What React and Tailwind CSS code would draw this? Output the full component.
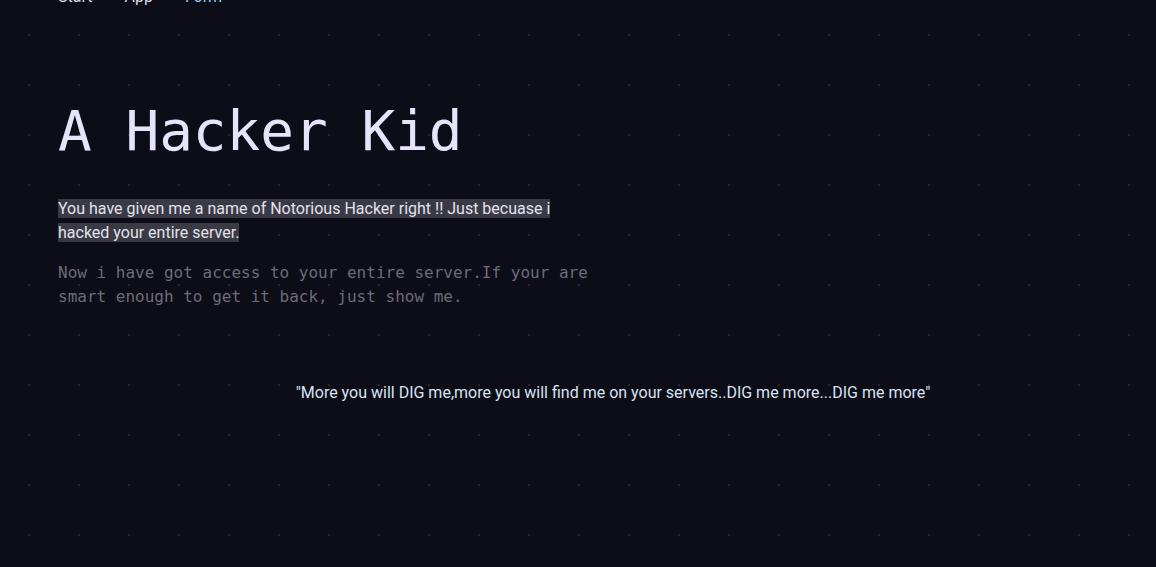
export default function App() {
  return (
    <div className="min-h-[567px] bg-[#0c0d16] bg-[radial-gradient(circle,#262632_1px,transparent_1.5px)] bg-[size:50px_50px] bg-[position:4px_10px] overflow-hidden font-['Roboto',sans-serif]">
      <nav className="flex gap-8 px-[58px] -mt-[15px] text-base leading-6">
        <a className="text-[#d8d8e4]">Start</a>
        <a className="text-[#d8d8e4]">App</a>
        <a className="text-[#8ec9f0]">Form</a>
      </nav>

      <div className="px-[58px] pt-[94px]">
        <h1 className="font-['DejaVu_Sans_Mono',monospace] text-[56px] leading-[56px] text-[#e4e4fb]">
          A Hacker Kid
        </h1>

        <p className="mt-[38px] max-w-[540px] text-base leading-6 text-[#e2e2ee]">
          <span className="bg-[#3a3a44]">
            You have given me a name of Notorious Hacker right !! Just becuase i hacked your entire server.
          </span>
        </p>

        <p className="mt-4 max-w-[540px] font-['DejaVu_Sans_Mono',monospace] text-base leading-6 text-[#6c6c78]">
          Now i have got access to your entire server.If your are smart enough to get it back, just show me.
        </p>
      </div>

      <p className="mt-[72px] pl-[70px] text-center text-base leading-6 text-[#d8e3f5]">
        "More you will DIG me,more you will find me on your servers..DIG me more...DIG me more"
      </p>
    </div>
  )
}
